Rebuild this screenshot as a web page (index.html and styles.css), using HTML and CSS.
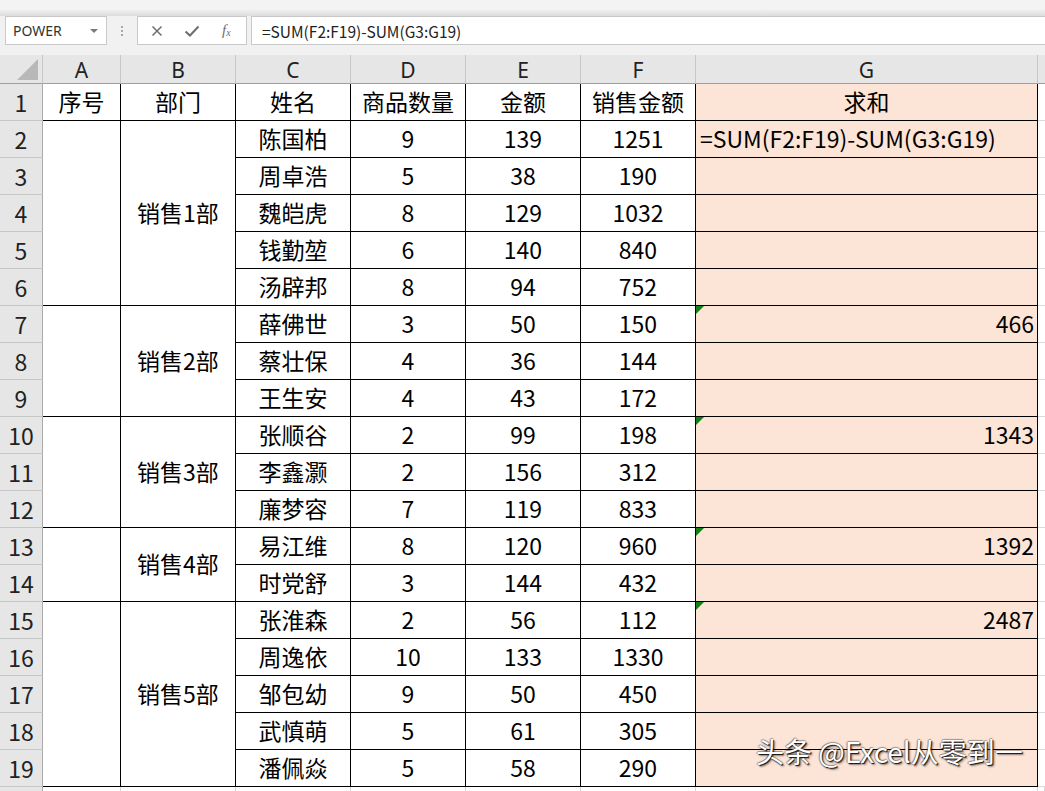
FILE: index.html
```html
<!DOCTYPE html>
<html lang="zh-CN">
<head>
<meta charset="utf-8">
<title>Excel</title>
<link rel="stylesheet" href="styles.css">
</head>
<body>
<div class="app">
  <div class="ribbon-edge"></div>
  <div class="fbar">
    <div class="namebox"><span>POWER</span><span class="dd"></span></div>
    <div class="sep"><i></i><i></i><i></i></div>
    <div class="fxbox">
      <svg class="ic" width="14" height="14" viewBox="0 0 14 14"><path d="M2.5 2.5 L11.5 11.5 M11.5 2.5 L2.5 11.5" stroke="#6e6e6e" stroke-width="1.5" fill="none"/></svg>
      <svg class="ic" width="16" height="14" viewBox="0 0 16 14"><path d="M1.5 7.5 L6 11.5 L14.5 2.5" stroke="#6e6e6e" stroke-width="2" fill="none"/></svg>
      <span class="fx">f<sub>x</sub></span>
    </div>
    <div class="formula">=SUM(F2:F19)-SUM(G3:G19)</div>
  </div>
  <div class="sheet">
    <div class="corner"><svg width="22" height="22" viewBox="0 0 22 22"><path d="M0 21 L21 21 L21 0 Z" fill="#b8b8b8"/></svg></div>
    <div class="ch">A</div><div class="ch">B</div><div class="ch">C</div><div class="ch">D</div><div class="ch">E</div><div class="ch">F</div><div class="ch">G</div><div class="ch chx"></div>

    <div class="rh">1</div><div class="c">序号</div><div class="c">部门</div><div class="c">姓名</div><div class="c">商品数量</div><div class="c">金额</div><div class="c">销售金额</div><div class="c g">求和</div><div class="x"></div>

    <div class="rh">2</div><div class="c m5"></div><div class="c m5">销售1部</div><div class="c">陈国柏</div><div class="c">9</div><div class="c">139</div><div class="c">1251</div><div class="c g fl">=SUM(F2:F19)-SUM(G3:G19)</div><div class="x"></div>
    <div class="rh">3</div><div class="c">周卓浩</div><div class="c">5</div><div class="c">38</div><div class="c">190</div><div class="c g"></div><div class="x"></div>
    <div class="rh">4</div><div class="c">魏皑虎</div><div class="c">8</div><div class="c">129</div><div class="c">1032</div><div class="c g"></div><div class="x"></div>
    <div class="rh">5</div><div class="c">钱勤堃</div><div class="c">6</div><div class="c">140</div><div class="c">840</div><div class="c g"></div><div class="x"></div>
    <div class="rh">6</div><div class="c">汤辟邦</div><div class="c">8</div><div class="c">94</div><div class="c">752</div><div class="c g"></div><div class="x"></div>

    <div class="rh">7</div><div class="c m3"></div><div class="c m3">销售2部</div><div class="c">薛佛世</div><div class="c">3</div><div class="c">50</div><div class="c">150</div><div class="c g num"><span class="tri"></span>466</div><div class="x"></div>
    <div class="rh">8</div><div class="c">蔡壮保</div><div class="c">4</div><div class="c">36</div><div class="c">144</div><div class="c g"></div><div class="x"></div>
    <div class="rh">9</div><div class="c">王生安</div><div class="c">4</div><div class="c">43</div><div class="c">172</div><div class="c g"></div><div class="x"></div>

    <div class="rh">10</div><div class="c m3"></div><div class="c m3">销售3部</div><div class="c">张顺谷</div><div class="c">2</div><div class="c">99</div><div class="c">198</div><div class="c g num"><span class="tri"></span>1343</div><div class="x"></div>
    <div class="rh">11</div><div class="c">李鑫灏</div><div class="c">2</div><div class="c">156</div><div class="c">312</div><div class="c g"></div><div class="x"></div>
    <div class="rh">12</div><div class="c">廉梦容</div><div class="c">7</div><div class="c">119</div><div class="c">833</div><div class="c g"></div><div class="x"></div>

    <div class="rh">13</div><div class="c m2"></div><div class="c m2">销售4部</div><div class="c">易江维</div><div class="c">8</div><div class="c">120</div><div class="c">960</div><div class="c g num"><span class="tri"></span>1392</div><div class="x"></div>
    <div class="rh">14</div><div class="c">时党舒</div><div class="c">3</div><div class="c">144</div><div class="c">432</div><div class="c g"></div><div class="x"></div>

    <div class="rh">15</div><div class="c m5"></div><div class="c m5">销售5部</div><div class="c">张淮森</div><div class="c">2</div><div class="c">56</div><div class="c">112</div><div class="c g num"><span class="tri"></span>2487</div><div class="x"></div>
    <div class="rh">16</div><div class="c">周逸依</div><div class="c">10</div><div class="c">133</div><div class="c">1330</div><div class="c g"></div><div class="x"></div>
    <div class="rh">17</div><div class="c">邹包幼</div><div class="c">9</div><div class="c">50</div><div class="c">450</div><div class="c g"></div><div class="x"></div>
    <div class="rh">18</div><div class="c">武慎萌</div><div class="c">5</div><div class="c">61</div><div class="c">305</div><div class="c g"></div><div class="x"></div>
    <div class="rh">19</div><div class="c">潘佩焱</div><div class="c">5</div><div class="c">58</div><div class="c">290</div><div class="c g"></div><div class="x"></div>

    <div class="rh last"></div><div class="e"></div><div class="e"></div><div class="e"></div><div class="e"></div><div class="e"></div><div class="e"></div><div class="e"></div><div class="e"></div>
  </div>
  <div class="watermark">头条 @Excel从零到一</div>
</div>
</body>
</html>
```

FILE: styles.css
```css
* { box-sizing: border-box; }
html, body { margin: 0; padding: 0; }
body {
  width: 1045px;
  height: 791px;
  overflow: hidden;
  background: #fff;
  font-family: "Noto Sans CJK SC", "Noto Sans", sans-serif;
  color: #000;
}
.app { position: relative; width: 1045px; height: 791px; overflow: hidden; }

.ribbon-edge {
  height: 16px;
  background: linear-gradient(#f3f3f3 0, #f3f3f3 9px, #dcdcdc 16px);
}

.fbar {
  height: 39px;
  background: #f1f1f1;
  display: flex;
  align-items: flex-start;
  padding-left: 5px;
}
.namebox {
  width: 102px;
  height: 29px;
  border: 1px solid #c9c9c9;
  background: #fff;
  display: flex;
  align-items: center;
  justify-content: space-between;
  padding: 0 8px 0 7px;
  font-family: "Noto Sans", "Liberation Sans", sans-serif;
  font-size: 14px;
  color: #333;
}
.dd {
  width: 0; height: 0;
  border-left: 4px solid transparent;
  border-right: 4px solid transparent;
  border-top: 4px solid #7a7a7a;
}
.sep {
  width: 30px;
  height: 29px;
  display: flex;
  flex-direction: column;
  align-items: center;
  justify-content: center;
  gap: 2px;
}
.sep i { display: block; width: 2px; height: 2px; background: #a8a8a8; }
.fxbox {
  width: 110px;
  height: 29px;
  border: 1px solid #c9c9c9;
  background: #fff;
  display: flex;
  align-items: center;
  padding-left: 12px;
  gap: 20px;
}
.ic { display: block; }
.fx {
  font-family: "Liberation Serif", serif;
  font-style: italic;
  font-size: 15px;
  color: #6e6e6e;
  margin-left: 2px;
}
.fx sub { font-size: 10px; vertical-align: -1px; }
.formula {
  flex: 1;
  margin-left: 4px;
  height: 29px;
  border: 1px solid #c9c9c9;
  border-right: none;
  background: #fff;
  display: flex;
  align-items: center;
  padding-left: 10px;
  font-size: 15.5px;
  color: #222;
}

.sheet {
  display: grid;
  grid-template-columns: 43px 78px 115px 115px 115px 115px 115px 342px 1fr;
  grid-template-rows: 29px repeat(19, 37px) 10px;
}
.corner {
  background: #e6e6e6;
  border-right: 1px solid #c6c6c6;
  border-bottom: 1px solid #9e9e9e;
  display: flex;
  align-items: flex-end;
  justify-content: flex-end;
  padding: 0 3px 2px 0;
}
.corner svg { display: block; }
.ch {
  background: #e6e6e6;
  border-right: 1px solid #c6c6c6;
  border-bottom: 1px solid #9e9e9e;
  display: flex;
  align-items: center;
  justify-content: center;
  font-family: "Noto Sans", sans-serif;
  font-size: 21px;
  color: #222;
  padding-top: 2px;
}
.chx { border-right: none; }
.rh {
  background: #e6e6e6;
  border-right: 1px solid #ababab;
  border-bottom: 1px solid #c6c6c6;
  display: flex;
  align-items: center;
  justify-content: center;
  font-family: "Noto Sans CJK SC", "Noto Sans", sans-serif;
  font-size: 23px;
  color: #222;
}
.rh.last { border-bottom: none; }
.c {
  border-right: 1px solid #000;
  border-bottom: 1px solid #000;
  display: flex;
  align-items: center;
  justify-content: center;
  font-size: 23px;
  color: #000;
  white-space: nowrap;
  background: #fff;
  padding-bottom: 3px;
}
.m5 { grid-row: span 5; }
.m3 { grid-row: span 3; }
.m2 { grid-row: span 2; }
.g { background: #fce4d6; position: relative; }
.fl { justify-content: flex-start; padding-left: 4px; }
.num { justify-content: flex-end; padding-right: 3px; }
.tri {
  position: absolute;
  left: 0;
  top: 0;
  width: 0; height: 0;
  border-top: 8px solid #128012;
  border-right: 8px solid transparent;
}
.x {
  border-bottom: 1px solid #d9d9d9;
  background: #fff;
}
.e {
  border-right: 1px solid #d9d9d9;
  background: #fff;
}

.watermark {
  position: absolute;
  left: 756px;
  top: 731px;
  font-size: 28px;
  color: #fff;
  white-space: nowrap;
  text-shadow: 1px 1px 1px rgba(0,0,0,0.9), 2px 2px 2px rgba(0,0,0,0.4), -1px 0 1px rgba(0,0,0,0.35), 0 -1px 1px rgba(0,0,0,0.35);
}
```
